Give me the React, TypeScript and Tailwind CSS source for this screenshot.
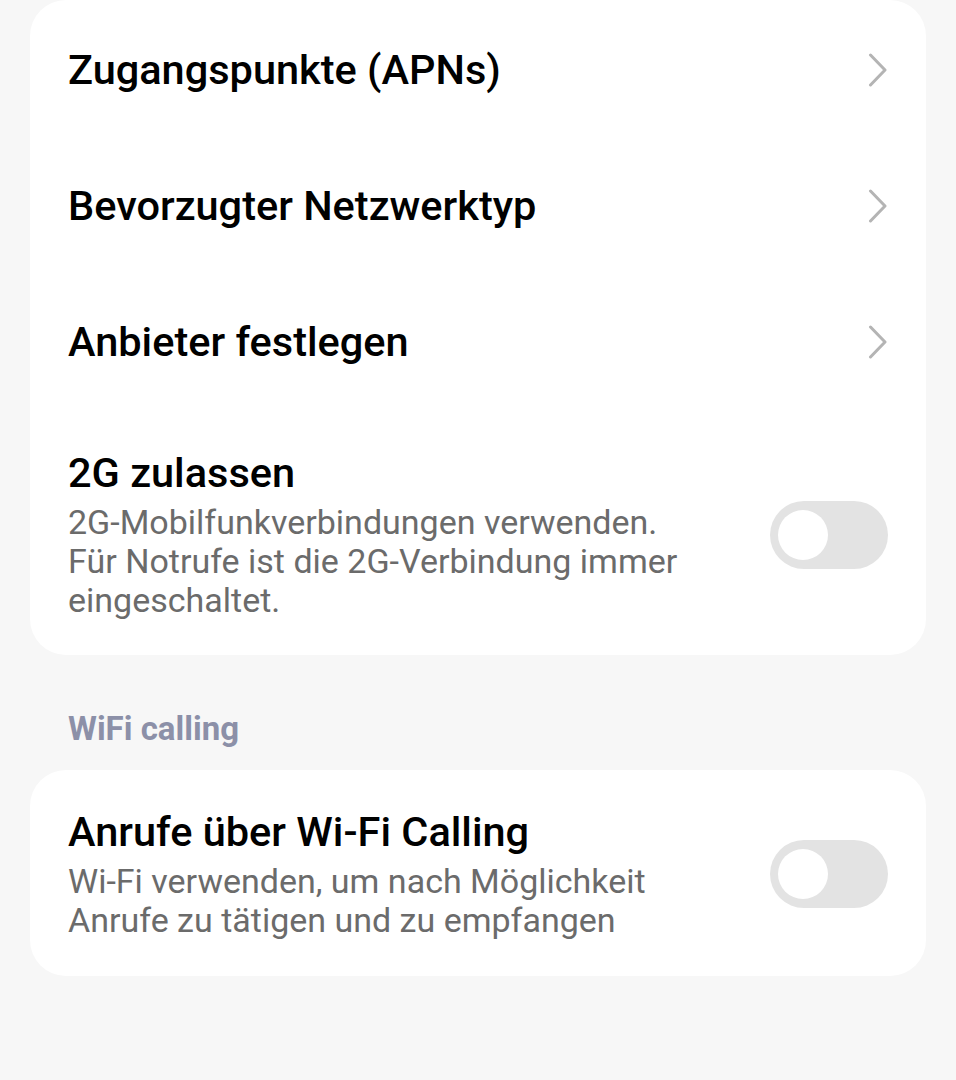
const font = { fontFamily: 'Roboto, "Noto Sans", sans-serif' };

function Chevron() {
  return (
    <svg width="20" height="34" viewBox="0 0 20 34" fill="none" className="shrink-0">
      <path d="M2.5 2 L17 17 L2.5 32" stroke="#b4b4b4" strokeWidth="3" strokeLinecap="round" strokeLinejoin="round" />
    </svg>
  );
}

function Toggle() {
  return (
    <div className="shrink-0 w-[118px] h-[68px] rounded-full bg-[#e3e3e3] flex items-center pl-[8px]">
      <div className="w-[50px] h-[50px] rounded-full bg-white" />
    </div>
  );
}

function LinkRow({ title }: { title: string }) {
  return (
    <div className="h-[136px] flex items-center justify-between">
      <span className="text-[41.5px] leading-[48px] font-medium text-black">{title}</span>
      <Chevron />
    </div>
  );
}

function SwitchRow({ title, lines }: { title: string; lines: string[] }) {
  return (
    <div className="flex items-center justify-between gap-6">
      <div className="flex flex-col">
        <span className="text-[41.5px] leading-[48px] font-medium text-black">{title}</span>
        <div className="mt-[6px] text-[34px] leading-[39px] text-[#6b6b6b]">
          {lines.map((l) => (
            <div key={l}>{l}</div>
          ))}
        </div>
      </div>
      <Toggle />
    </div>
  );
}

export default function App() {
  return (
    <div className="w-[956px] h-[1080px] overflow-hidden bg-[#f7f7f7]" style={font}>
      {/* Mobilfunk */}
      <div className="mx-[30px] rounded-[36px] bg-white pt-[2px] pb-[35px] px-[38px]">
        <LinkRow title="Zugangspunkte (APNs)" />
        <LinkRow title="Bevorzugter Netzwerktyp" />
        <LinkRow title="Anbieter festlegen" />
        <div className="pt-[39px]">
          <SwitchRow
            title="2G zulassen"
            lines={[
              '2G-Mobilfunkverbindungen verwenden.',
              'Für Notrufe ist die 2G-Verbindung immer',
              'eingeschaltet.',
            ]}
          />
        </div>
      </div>

      {/* WiFi calling */}
      <div className="mt-[54px] mb-[21px] px-[68px] h-[40px] flex items-center text-[33px] font-bold text-[#8c90a8]">
        WiFi calling
      </div>
      <div className="mx-[30px] rounded-[36px] bg-white pt-[38px] pb-[36px] px-[38px]">
        <SwitchRow
          title="Anrufe über Wi-Fi Calling"
          lines={['Wi-Fi verwenden, um nach Möglichkeit', 'Anrufe zu tätigen und zu empfangen']}
        />
      </div>
    </div>
  );
}
